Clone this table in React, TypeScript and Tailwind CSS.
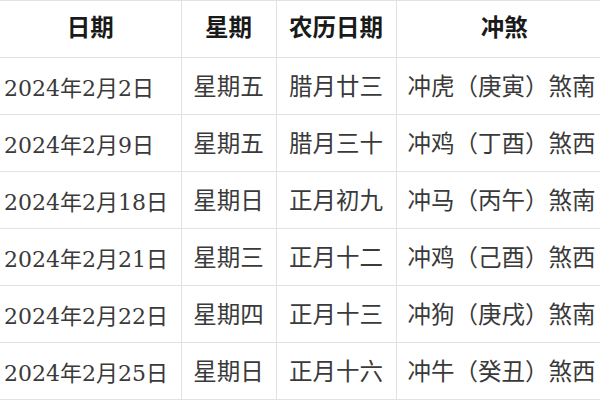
import React from "react";

const rows = [
  { date: "2024年2月2日", week: "星期五", lunar: "腊月廿三", clash: "冲虎（庚寅）煞南" },
  { date: "2024年2月9日", week: "星期五", lunar: "腊月三十", clash: "冲鸡（丁酉）煞西" },
  { date: "2024年2月18日", week: "星期日", lunar: "正月初九", clash: "冲马（丙午）煞南" },
  { date: "2024年2月21日", week: "星期三", lunar: "正月十二", clash: "冲鸡（己酉）煞西" },
  { date: "2024年2月22日", week: "星期四", lunar: "正月十三", clash: "冲狗（庚戌）煞南" },
  { date: "2024年2月25日", week: "星期日", lunar: "正月十六", clash: "冲牛（癸丑）煞西" },
];

export default function App() {
  return (
    <div className="w-[600px] h-[400px] overflow-hidden bg-white">
      <table
        className="table-fixed border-collapse w-[612px] text-[23.5px] text-[#3a3a3a]"
        style={{ fontFamily: '"DejaVu Serif", "Noto Sans CJK SC", serif' }}
      >
        <colgroup>
          <col className="w-[181px]" />
          <col className="w-[95px]" />
          <col className="w-[120px]" />
          <col className="w-[216px]" />
        </colgroup>
        <thead>
          <tr className="h-[57px] border-t border-[#e2e2e2]">
            <th className="border-b border-r border-[#e2e2e2] font-bold text-[#1a1a1a] text-center">日期</th>
            <th className="border-b border-r border-[#e2e2e2] font-bold text-[#1a1a1a] text-center">星期</th>
            <th className="border-b border-r border-[#e2e2e2] font-bold text-[#1a1a1a] text-center">农历日期</th>
            <th className="border-b border-[#e2e2e2] font-bold text-[#1a1a1a] text-center">冲煞</th>
          </tr>
        </thead>
        <tbody>
          {rows.map((r) => (
            <tr key={r.date} className="h-[57px]">
              <td className="border-b border-r border-[#e2e2e2] pl-[4px] pt-[4px] whitespace-nowrap text-[22px]">{r.date}</td>
              <td className="border-b border-r border-[#e2e2e2] text-center pt-[4px] whitespace-nowrap">{r.week}</td>
              <td className="border-b border-r border-[#e2e2e2] text-center pt-[4px] whitespace-nowrap">{r.lunar}</td>
              <td className="border-b border-[#e2e2e2] pl-[11px] pt-[4px] whitespace-nowrap">{r.clash}</td>
            </tr>
          ))}
        </tbody>
      </table>
    </div>
  );
}
